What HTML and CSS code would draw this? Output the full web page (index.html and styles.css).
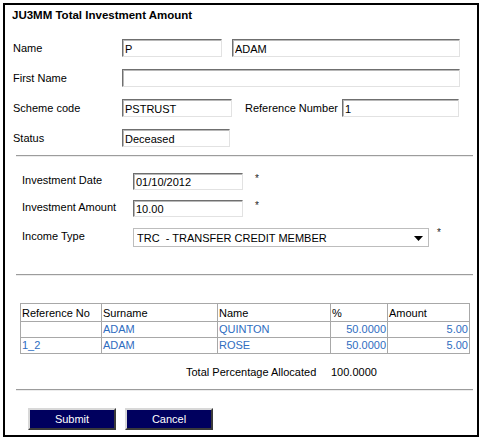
FILE: index.html
```html
<!DOCTYPE html>
<html>
<head>
<meta charset="utf-8">
<link rel="stylesheet" href="styles.css">
</head>
<body>
<div class="frame">
  <div class="title">JU3MM Total Investment Amount</div>

  <div class="sec-a">
    <div class="row">
      <label class="lbl-a">Name</label>
      <input class="inp w100" type="text" value="P">
      <input class="inp w228 ml10" type="text" value="ADAM">
    </div>
    <div class="row">
      <label class="lbl-a">First Name</label>
      <input class="inp w338" type="text" value="">
    </div>
    <div class="row">
      <label class="lbl-a">Scheme code</label>
      <input class="inp w110" type="text" value="PSTRUST">
      <label class="lbl-ref">Reference Number</label>
      <input class="inp w117" type="text" value="1">
    </div>
    <div class="row">
      <label class="lbl-a">Status</label>
      <input class="inp w108" type="text" value="Deceased">
    </div>
  </div>

  <div class="rule rule-1"></div>

  <div class="sec-b">
    <div class="row-b">
      <label class="lbl-b">Investment Date</label>
      <input class="inp w110 h17" type="text" value="01/10/2012">
      <span class="req">*</span>
    </div>
    <div class="row-b">
      <label class="lbl-b">Investment Amount</label>
      <input class="inp w110 h17" type="text" value="10.00">
      <span class="req">*</span>
    </div>
    <div class="row-b row-sel">
      <label class="lbl-b">Income Type</label>
      <div class="sel">
        <select class="sel-el">
          <option>TRC&nbsp; - TRANSFER CREDIT MEMBER</option>
        </select>
        <svg class="sel-arrow" width="9" height="5" viewBox="0 0 9 5"><path d="M0 0H9L4.5 5Z" fill="#000"/></svg>
      </div>
      <span class="req req-sel">*</span>
    </div>
  </div>

  <div class="rule rule-2"></div>

  <table class="alloc">
    <colgroup>
      <col class="c1"><col class="c2"><col class="c3"><col class="c4"><col class="c5">
    </colgroup>
    <thead>
      <tr><th>Reference No</th><th>Surname</th><th>Name</th><th>%</th><th>Amount</th></tr>
    </thead>
    <tbody>
      <tr><td></td><td>ADAM</td><td>QUINTON</td><td class="num">50.0000</td><td class="num">5.00</td></tr>
      <tr><td>1_2</td><td>ADAM</td><td>ROSE</td><td class="num">50.0000</td><td class="num">5.00</td></tr>
    </tbody>
  </table>

  <div class="total">
    <span class="total-lbl">Total Percentage Allocated</span>
    <span class="total-val">100.0000</span>
  </div>

  <div class="rule rule-3"></div>

  <div class="actions">
    <button class="btn">Submit</button>
    <button class="btn">Cancel</button>
  </div>
</div>
</body>
</html>
```

FILE: styles.css
```css
html, body {
  margin: 0;
  padding: 0;
  background: #ffffff;
}
body {
  font-family: "Liberation Sans", Arial, sans-serif;
  font-size: 11px;
  color: #000;
}
.frame {
  box-sizing: border-box;
  margin: 3px 0 0 3px;
  width: 476px;
  height: 434px;
  border: 2px solid #000;
  background: #fff;
}
.title {
  padding: 3px 0 0 7px;
  font-weight: bold;
  font-size: 11.5px;
  line-height: 14px;
}
.sec-a {
  margin-top: 17px;
  padding-left: 8px;
  display: flex;
  flex-direction: column;
  gap: 12px;
}
.row {
  display: flex;
  align-items: center;
  height: 18px;
}
.lbl-a {
  width: 109px;
  flex: none;
}
.lbl-ref {
  width: 97px;
  margin-left: 13px;
  flex: none;
}
.inp {
  box-sizing: border-box;
  height: 18px;
  margin: 0;
  padding: 1px 2px 0;
  font-family: "Liberation Sans", Arial, sans-serif;
  font-size: 11px;
  color: #000;
  background: #fff;
  border: 1px solid;
  border-color: #6f6f6f #e2e2e2 #e2e2e2 #6f6f6f;
  box-shadow: inset 1px 1px 0 #b8b8b8;
  outline: none;
  flex: none;
}
.h17 { height: 17px; }
.w100 { width: 100px; }
.w108 { width: 108px; }
.w110 { width: 110px; }
.w117 { width: 117px; }
.w228 { width: 228px; }
.w338 { width: 338px; }
.ml10 { margin-left: 10px; }

.rule {
  margin-left: 11px;
  width: 457px;
  height: 0;
  border-top: 1px solid #9c9c9c;
  border-bottom: 1px solid #ececec;
}
.rule-1 { margin-top: 8px; }
.rule-2 { margin-top: 27px; }
.rule-3 { margin-top: 10px; }

.sec-b {
  margin-top: 16px;
  padding-left: 17px;
  display: flex;
  flex-direction: column;
  gap: 10px;
}
.row-b {
  display: flex;
  align-items: center;
  height: 17px;
}
.row-sel {
  height: 19px;
  margin-top: 1px;
}
.lbl-b {
  width: 111px;
  flex: none;
  margin-top: -4px;
}
.req {
  align-self: flex-start;
  margin-left: 12px;
  font-size: 10px;
  line-height: 10px;
  margin-top: 1px;
  color: #222;
}
.req-sel {
  margin-left: 8px;
  margin-top: 0;
}
.sel {
  position: relative;
  width: 296px;
  height: 19px;
  flex: none;
}
.sel-el {
  -webkit-appearance: none;
  appearance: none;
  box-sizing: border-box;
  width: 100%;
  height: 19px;
  margin: 0;
  padding: 0 0 0 3px;
  border: 1px solid #bdbdbd;
  border-radius: 0;
  background: #fff;
  font-family: "Liberation Sans", Arial, sans-serif;
  font-size: 11px;
  color: #000;
  outline: none;
}
.sel-arrow {
  position: absolute;
  right: 6px;
  top: 8px;
}

.alloc {
  margin: 27px 0 0 15px;
  width: 449px;
  border-collapse: collapse;
  table-layout: fixed;
}
.c1 { width: 81px; }
.c2 { width: 116px; }
.c3 { width: 113px; }
.c4 { width: 57px; }
.c5 { width: 82px; }
.alloc th, .alloc td {
  border: 1px solid #a8a8a8;
  padding: 0 1px;
  text-align: left;
  font-weight: normal;
  white-space: nowrap;
  overflow: hidden;
}
.alloc th {
  height: 17px;
  color: #000;
}
.alloc td {
  height: 15px;
  line-height: 13px;
  color: #2f6dbf;
}
.alloc td.num {
  text-align: right;
}

.total {
  display: flex;
  margin: 11px 0 0 181px;
  line-height: 14px;
}
.total-lbl {
  width: 145px;
}

.actions {
  display: flex;
  gap: 9px;
  margin: 17px 0 0 23px;
}
.btn {
  box-sizing: border-box;
  width: 88px;
  height: 22px;
  margin: 0;
  padding: 0;
  background: #00005e;
  color: #fff;
  font-family: "Liberation Sans", Arial, sans-serif;
  font-size: 11px;
  border: 2px solid;
  border-color: #d8d8d8 #3a3a3a #3a3a3a #d8d8d8;
  border-radius: 0;
}
```
